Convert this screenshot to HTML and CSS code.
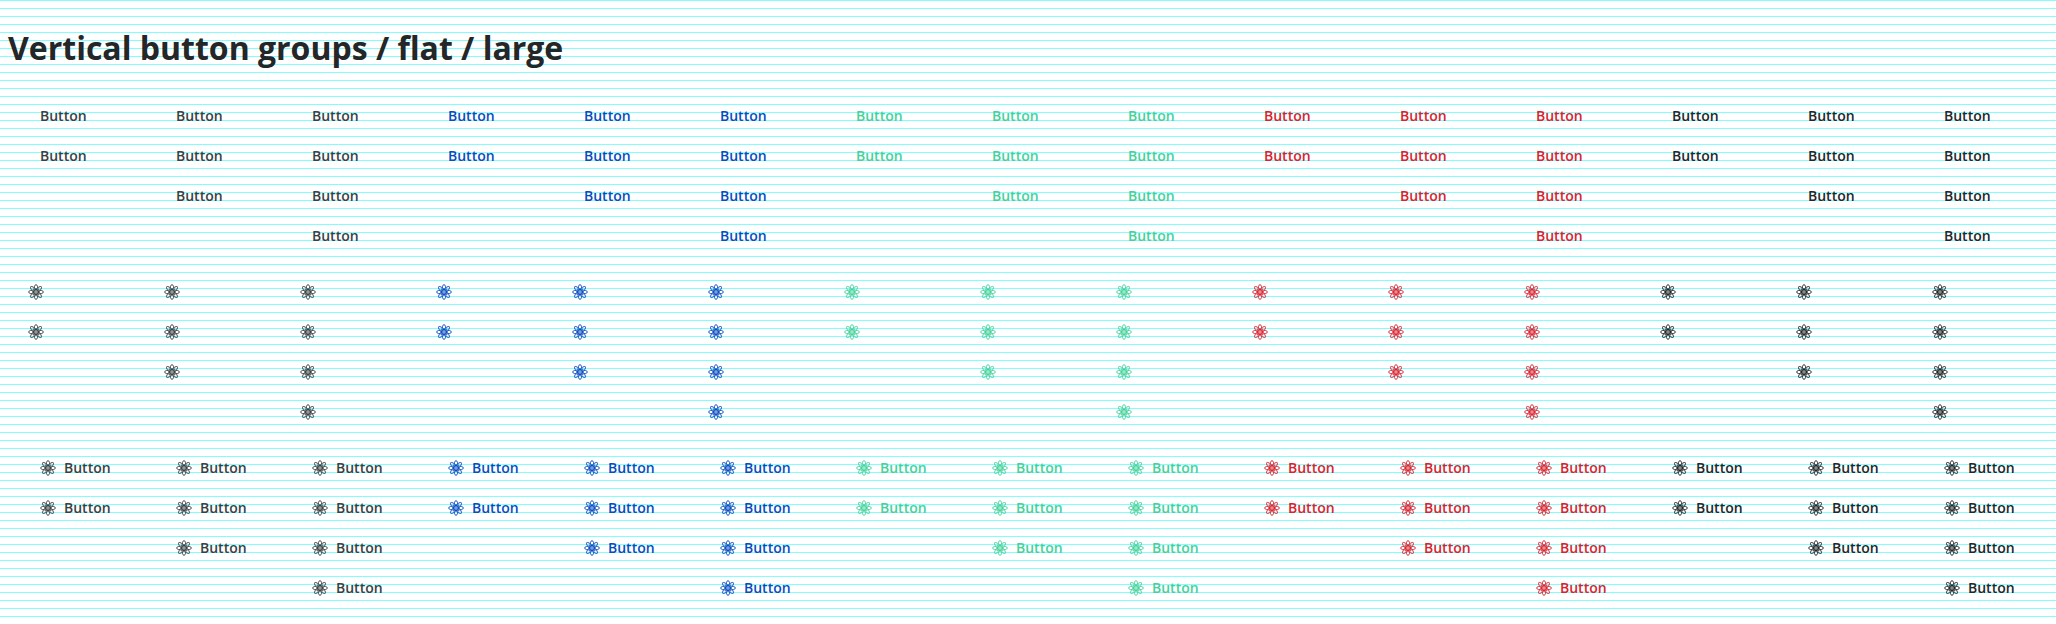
FILE: index.html
```html
<!DOCTYPE html>
<html lang="en">
<head>
<meta charset="utf-8">
<title>Vertical button groups / flat / large</title>
<link rel="stylesheet" href="styles.css">
</head>
<body>
<svg class="sprite" aria-hidden="true">
  <symbol id="atom" viewBox="0 0 16 16">
    <g fill="none" stroke="currentColor" stroke-width="0.9">
      <ellipse cx="8" cy="8" rx="7.5" ry="2.2"/>
      <ellipse cx="8" cy="8" rx="7.5" ry="2.2" transform="rotate(45 8 8)"/>
      <ellipse cx="8" cy="8" rx="7.5" ry="2.2" transform="rotate(90 8 8)"/>
      <ellipse cx="8" cy="8" rx="7.5" ry="2.2" transform="rotate(135 8 8)"/>
      <circle cx="8" cy="8" r="1.3"/>
    </g>
  </symbol>
</svg>
<h1 class="title">Vertical button groups / flat / large</h1>
<main class="grid" id="grid"></main>
<script src="groups.js"></script>
</body>
</html>
```
FILE: styles.css
```css
* {
  box-sizing: border-box;
}

body {
  margin: 0;
  padding: 8px;
  font-family: "Open Sans", sans-serif;
  color: #242628;
  background: repeating-linear-gradient(to bottom, #80ffff 0 1px, #ffffff 1px 8px);
}

.sprite {
  display: none;
}

.title {
  margin: 0;
  padding: 16px 0;
  font-size: 32px;
  font-weight: 700;
  line-height: 48px;
}

.grid {
  display: grid;
  grid-template-columns: repeat(15, 1fr);
}

.group {
  display: flex;
  flex-direction: column;
  align-items: flex-start;
  padding: 8px;
}

.button {
  display: flex;
  align-items: center;
  justify-content: center;
  gap: 8px;
  height: 40px;
  padding: 0 24px;
  border: 0;
  background: transparent;
  font: 600 14px/24px "Open Sans", sans-serif;
  cursor: pointer;
}

.button-icon {
  width: 40px;
  padding: 0;
}

.icon {
  flex: none;
  width: 16px;
  height: 16px;
}

.default { color: #3b3e42; }
.primary { color: #0a4bbd; }
.success { color: #46d19a; }
.danger { color: #d8232f; }
.dark { color: #242628; }
```
FILE: groups.js
```js
const grid = document.getElementById('grid');
const icon = '<svg class="icon" aria-hidden="true"><use href="#atom"/></svg>';
const kinds = [
  { content: 'Button', attrs: 'class="button' },
  { content: icon, attrs: 'aria-label="Button" class="button button-icon' },
  { content: icon + '<span>Button</span>', attrs: 'class="button' }
];
const themes = ['default', 'primary', 'success', 'danger', 'dark'];

for (const kind of kinds) {
  for (const theme of themes) {
    for (const count of [2, 3, 4]) {
      const group = document.createElement('div');
      group.className = 'group';
      group.setAttribute('role', 'group');
      group.innerHTML = `<button type="button" ${kind.attrs} ${theme}">${kind.content}</button>`.repeat(count);
      grid.append(group);
    }
  }
}
```
